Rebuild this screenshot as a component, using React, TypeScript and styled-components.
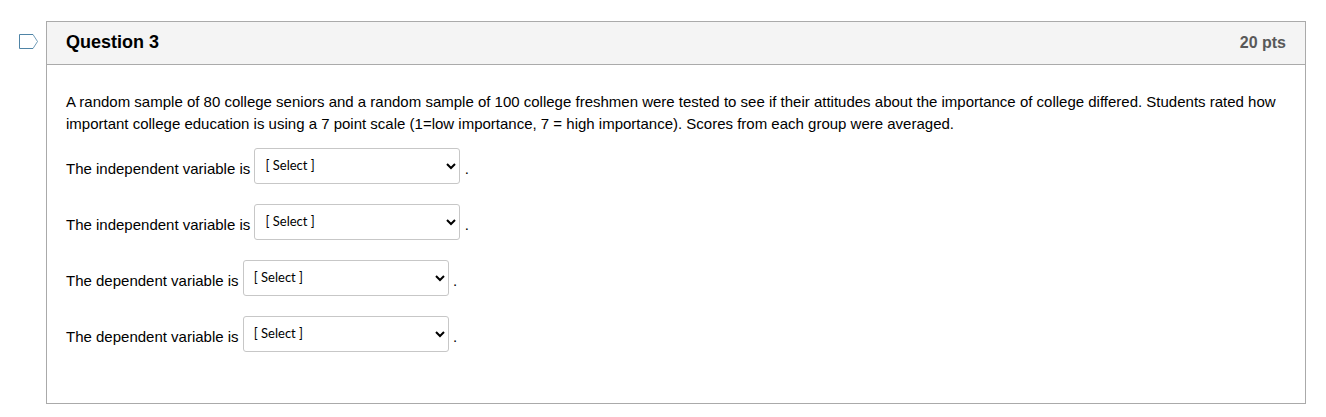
import React from "react";
import styled, { createGlobalStyle } from "styled-components";

const GlobalStyle = createGlobalStyle`
  * { box-sizing: border-box; }
  body {
    margin: 0;
    background: #fff;
    color: #000;
    font-family: "Liberation Sans", Arial, sans-serif;
    font-size: 15px;
    line-height: 22px;
  }
`;

const Page = styled.main`
  display: flex;
  align-items: flex-start;
  padding: 21px 20px 12px 18px;
`;

const FlagButton = styled.button`
  flex: none;
  width: 28px;
  padding: 12px 0;
  border: 0;
  background: none;
  display: flex;
  cursor: pointer;
`;

const Card = styled.section`
  flex: 1;
  min-width: 0;
  border: 1px solid #aaa;
`;

const CardHeader = styled.header`
  display: flex;
  align-items: baseline;
  justify-content: space-between;
  padding: 9px 19px 10px;
  background: #f4f4f4;
  border-bottom: 1px solid #aaa;
`;

const Title = styled.h2`
  margin: 0;
  font-size: 18px;
  line-height: 22px;
`;

const Points = styled.span`
  font-size: 16px;
  font-weight: bold;
  color: #595959;
`;

const CardBody = styled.div`
  padding: 26px 19px 43px;
`;

const Prompt = styled.p`
  margin: 0 0 13px;
`;

const AnswerList = styled.div`
  display: flex;
  flex-direction: column;
  gap: 12px;
`;

const AnswerRow = styled.div``;

const Select = styled.select`
  width: 206px;
  height: 36px;
  margin: 0 0 8px;
  padding: 0 6px 2px;
  vertical-align: middle;
  border: 1px solid #c7c7c7;
  border-radius: 3px;
  background: #fff;
  color: #000;
  font-family: Lato, sans-serif;
  font-size: 13px;
`;

const answers = [
  { id: "independent-1", label: "The independent variable is" },
  { id: "independent-2", label: "The independent variable is" },
  { id: "dependent-1", label: "The dependent variable is" },
  { id: "dependent-2", label: "The dependent variable is" },
];

export default function App() {
  return (
    <>
      <GlobalStyle />
      <Page>
        <FlagButton type="button" aria-label="Flag question">
          <svg width="20" height="17" viewBox="0 0 20 17" fill="none" stroke="#4f84a6">
            <path d="M15 1.5H1.5V15.5H15" />
            <path d="M15 1.5L19.5 8.5L15 15.5" strokeOpacity="0.8" />
          </svg>
        </FlagButton>
        <Card>
          <CardHeader>
            <Title>Question 3</Title>
            <Points>20 pts</Points>
          </CardHeader>
          <CardBody>
            <Prompt>
              A random sample of 80 college seniors and a random sample of 100 college freshmen were
              tested to see if their attitudes about the importance of college differed. Students
              rated how important college education is using a 7 point scale (1=low importance, 7 =
              high importance). Scores from each group were averaged.
            </Prompt>
            <AnswerList>
              {answers.map(({ id, label }) => (
                <AnswerRow key={id}>
                  <label htmlFor={id}>{label}</label>{" "}
                  <Select id={id}>
                    <option>[ Select ]</option>
                  </Select>{" "}
                  .
                </AnswerRow>
              ))}
            </AnswerList>
          </CardBody>
        </Card>
      </Page>
    </>
  );
}
